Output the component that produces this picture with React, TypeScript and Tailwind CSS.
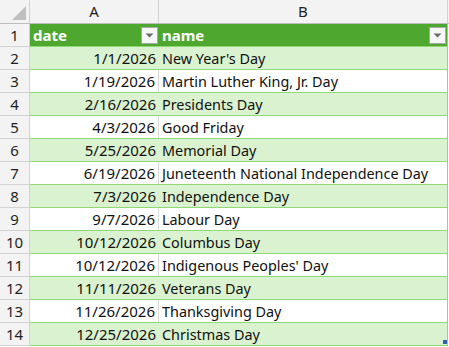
import React from "react";

const rows: [string, string][] = [
  ["1/1/2026", "New Year's Day"],
  ["1/19/2026", "Martin Luther King, Jr. Day"],
  ["2/16/2026", "Presidents Day"],
  ["4/3/2026", "Good Friday"],
  ["5/25/2026", "Memorial Day"],
  ["6/19/2026", "Juneteenth National Independence Day"],
  ["7/3/2026", "Independence Day"],
  ["9/7/2026", "Labour Day"],
  ["10/12/2026", "Columbus Day"],
  ["10/12/2026", "Indigenous Peoples' Day"],
  ["11/11/2026", "Veterans Day"],
  ["11/26/2026", "Thanksgiving Day"],
  ["12/25/2026", "Christmas Day"],
];

function FilterButton() {
  return (
    <div className="flex h-[17px] w-[17px] items-center justify-center border border-[#a8a8a8] bg-[#f7f7f7]">
      <svg width="9" height="5" viewBox="0 0 9 5">
        <path d="M0.5 0.5 L8.5 0.5 L4.5 4.5 Z" fill="#6b6b6b" />
      </svg>
    </div>
  );
}

function RowNum({ n }: { n: number }) {
  return (
    <div className="flex h-[23px] w-[30px] shrink-0 items-center justify-center border-b border-r border-[#d2d2d2] bg-[#f3f3f3] pt-[1px] text-[15px] text-[#1f1f1f]">
      {n}
    </div>
  );
}

export default function App() {
  return (
    <div
      className="relative h-[347px] w-[449px] overflow-hidden bg-white"
      style={{ fontFamily: '"Noto Sans", "Liberation Sans", sans-serif' }}
    >
      {/* column letters */}
      <div className="flex h-[24px] border-b border-[#bdbdbd] bg-[#f3f3f3] text-[15px] text-[#1f1f1f]">
        <div className="relative w-[30px] shrink-0 border-r border-[#d2d2d2]">
          <svg className="absolute bottom-[3px] right-[3px]" width="14" height="14" viewBox="0 0 14 14">
            <path d="M14 0 L14 14 L0 14 Z" fill="#bfbfbf" />
          </svg>
        </div>
        <div className="flex w-[129px] shrink-0 items-center justify-center border-r border-[#d2d2d2]">
          A
        </div>
        <div className="flex w-[289px] shrink-0 items-center justify-center border-r border-[#d2d2d2]">
          B
        </div>
      </div>

      {/* header row */}
      <div className="flex">
        <RowNum n={1} />
        <div className="flex h-[23px] w-[418px] shrink-0 border-b border-r border-[#8ed973] bg-[#4ea72e] text-[15px] font-bold text-white">
          <div className="flex w-[129px] shrink-0 items-center justify-between pl-[3px] pr-[1px]">
            <span className="pt-[1px]">date</span>
            <FilterButton />
          </div>
          <div className="flex flex-1 items-center justify-between pl-[3px] pr-[1px]">
            <span className="pt-[1px]">name</span>
            <FilterButton />
          </div>
        </div>
      </div>

      {rows.map(([d, name], i) => {
        const band = i % 2 === 0;
        return (
          <div key={i} className="flex">
            <RowNum n={i + 2} />
            <div
              className={
                "flex h-[23px] w-[418px] shrink-0 border-b border-r border-[#8ed973] text-[#111] " +
                (band ? "bg-[#daf2d0]" : "bg-white")
              }
            >
              <div
                className={
                  "flex w-[129px] shrink-0 items-center justify-end pr-[3px] pt-[1px] text-[15px] " +
                  (band ? "" : "border-r border-[#d9d9d9]")
                }
              >
                {d}
              </div>
              <div className="flex flex-1 items-center pl-[3px] pt-[1px] text-[14.4px]">{name}</div>
            </div>
          </div>
        );
      })}

      <div className="absolute left-[443px] top-[340px] h-[4px] w-[4px] bg-[#2f5fb3]" />
    </div>
  );
}
